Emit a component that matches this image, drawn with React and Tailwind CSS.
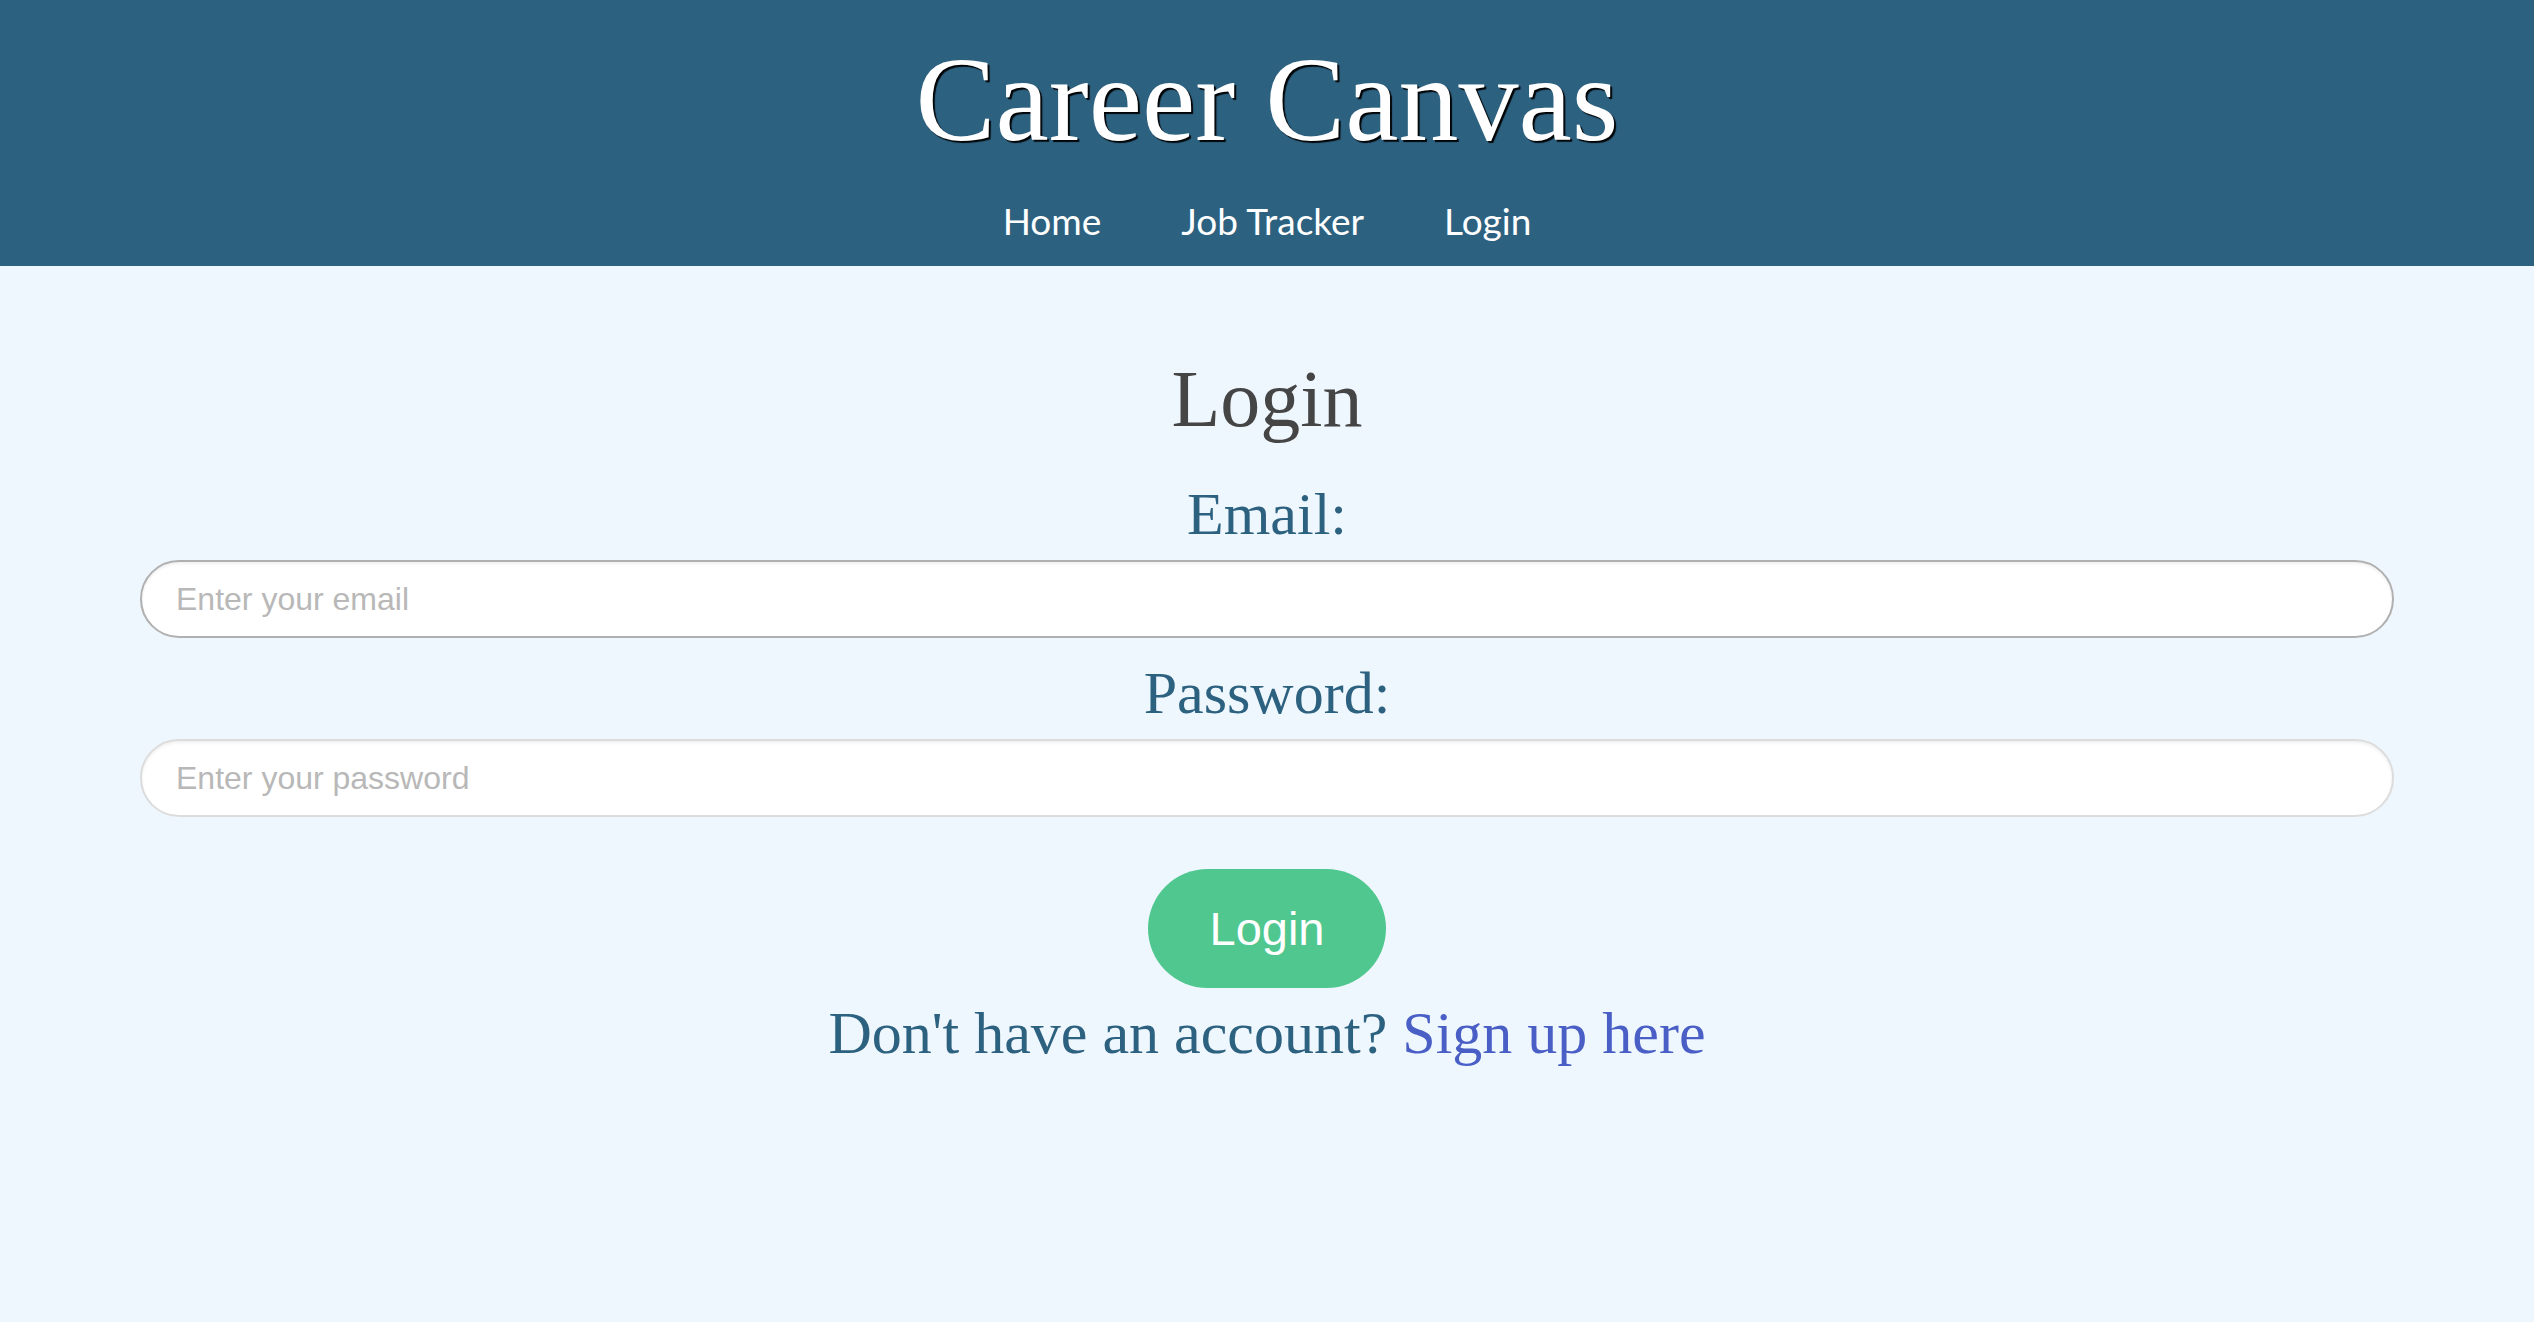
import React, { useState } from "react";

// font stacks written out as Tailwind arbitrary values
const serif = "font-['Liberation_Serif','Times_New_Roman',serif]";
const sans = "font-['Liberation_Sans',Arial,sans-serif]";

function Header() {
  return (
    <header className="bg-[#2d6180] pt-[40px] pb-[27px] flex flex-col items-center">
      <h1
        className={`${serif} text-white text-[120px] leading-none font-normal [text-shadow:2px_2px_1px_rgba(0,0,0,0.95)]`}
      >
        Career Canvas
      </h1>
      <nav className="mt-[42px] flex gap-[80px] text-white text-[37px] leading-none font-['Lato','Open_Sans',sans-serif]">
        <a href="#" className="block">Home</a>
        <a href="#" className="block">Job Tracker</a>
        <a href="#" className="block">Login</a>
      </nav>
    </header>
  );
}

function LoginForm() {
  const [email, setEmail] = useState("");
  const [password, setPassword] = useState("");

  const inputCls = `${sans} w-full h-[78px] rounded-full bg-white pl-[34px] text-[32px] text-gray-700 outline-none placeholder:text-[#b8b8b8] shadow-[inset_0_2px_3px_rgba(0,0,0,0.06)]`;

  return (
    <main className="flex flex-col items-center px-[140px] pt-[93px]">
      <h2 className={`${serif} text-[80px] leading-none text-[#454545] font-normal`}>Login</h2>
      <label className={`${serif} mt-[45px] text-[60px] leading-none text-[#2d6180]`}>Email:</label>
      <input
        type="email"
        value={email}
        onChange={(e) => setEmail(e.target.value)}
        placeholder="Enter your email"
        className={`${inputCls} mt-[16px] border-2 border-[#b0b0b0]`}
      />
      <label className={`${serif} mt-[25px] text-[60px] leading-none text-[#2d6180]`}>Password:</label>
      <input
        type="password"
        value={password}
        onChange={(e) => setPassword(e.target.value)}
        placeholder="Enter your password"
        className={`${inputCls} mt-[16px] border-2 border-[#dcdcdc]`}
      />
      <button
        className={`${sans} mt-[52px] w-[238px] h-[119px] rounded-full bg-[#50c78f] text-white text-[47px] leading-none`}
      >
        Login
      </button>
      <p className={`${serif} mt-[15px] text-[60px] leading-none text-[#2d6180]`}>
        Don't have an account?{" "}
        <a href="#" className="text-[#4a5fc6]">Sign up here</a>
      </p>
    </main>
  );
}

export default function App() {
  return (
    <div className="min-h-screen bg-[#eff7fe]">
      <Header />
      <LoginForm />
    </div>
  );
}
